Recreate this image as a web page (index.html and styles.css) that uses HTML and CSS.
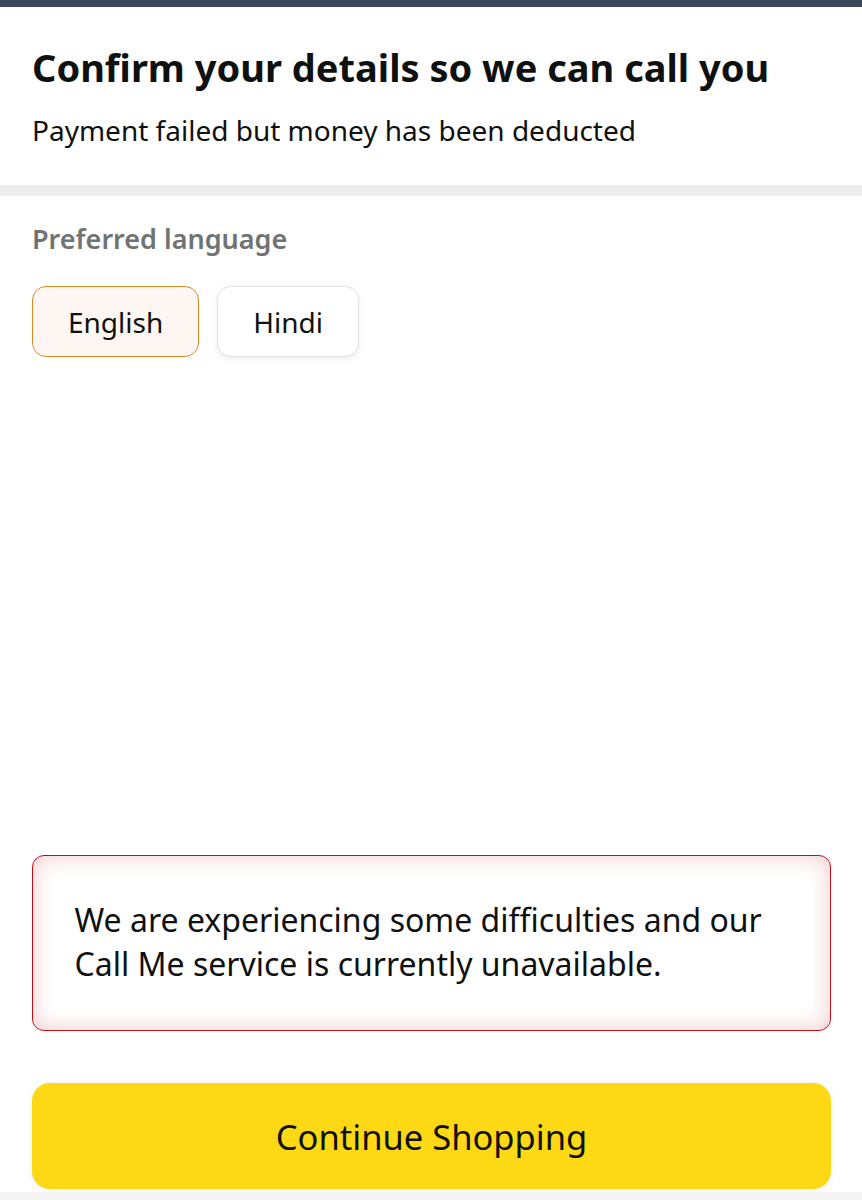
FILE: index.html
```html
<!DOCTYPE html>
<html lang="en">
<head>
<meta charset="utf-8">
<title>Confirm your details</title>
<link rel="stylesheet" href="styles.css">
</head>
<body>
<div class="page">
  <div class="topbar"></div>
  <header class="header">
    <h1 class="title">Confirm your details so we can call you</h1>
    <p class="subtitle">Payment failed but money has been deducted</p>
  </header>
  <div class="divider"></div>
  <main class="content">
    <div class="label">Preferred language</div>
    <div class="chips">
      <button class="chip chip-selected">English</button>
      <button class="chip">Hindi</button>
    </div>
  </main>
  <div class="alert">
    <p>We are experiencing some difficulties and our Call Me service is currently unavailable.</p>
  </div>
  <div class="actions">
    <button class="primary">Continue Shopping</button>
  </div>
  <div class="footer-strip"></div>
</div>
</body>
</html>
```

FILE: styles.css
```css
* { box-sizing: border-box; }
html, body { margin: 0; padding: 0; background: #fff; }
body {
  font-family: "Noto Sans", "Open Sans", sans-serif;
  color: #0f1111;
}
.page {
  min-height: 1200px;
  display: flex;
  flex-direction: column;
}
.topbar {
  height: 7px;
  background: #3b4858;
}
.header {
  padding: 35px 32px 35px;
}
.title {
  margin: 0;
  font-size: 38px;
  line-height: 50px;
  font-weight: 700;
  color: #0f1111;
}
.subtitle {
  margin: 18px 0 0;
  font-size: 28px;
  line-height: 40px;
  color: #0f1111;
}
.divider {
  height: 11px;
  background: #ededed;
}
.content {
  flex: 1;
  padding: 23px 32px 0;
}
.label {
  font-size: 27px;
  line-height: 40px;
  font-weight: 600;
  color: #6f7373;
}
.chips {
  display: flex;
  gap: 18px;
  margin-top: 27px;
}
.chip {
  font-family: inherit;
  font-size: 28px;
  color: #0f1111;
  height: 71px;
  padding: 0 35px;
  border-radius: 14px;
  background: #fff;
  border: 1.5px solid #e3e3e3;
  box-shadow: 0 2px 7px rgba(0,0,0,0.08);
}
.chip-selected {
  background: #fef6f2;
  border-color: #d98a25;
  box-shadow: none;
}
.alert {
  margin: 0 31px 0 32px;
  height: 176px;
  border: 1.5px solid #c40c16;
  border-radius: 12px;
  box-shadow: inset 0 0 22px rgba(200, 30, 40, 0.24);
  padding: 41.5px 40px 0 41.5px;
}
.alert p {
  margin: 0;
  font-size: 32px;
  line-height: 44px;
  color: #0f1111;
}
.actions {
  padding: 52px 31px 0 32px;
}
.primary {
  display: block;
  width: 100%;
  height: 106px;
  border: none;
  border-radius: 18px;
  background: #fdd814;
  font-family: inherit;
  font-size: 34.5px;
  color: #0f1111;
  box-shadow: 0 1px 6px rgba(0,0,0,0.08);
}
.footer-strip {
  margin-top: 3px;
  height: 8px;
  background: #f5f5f5;
}
```
